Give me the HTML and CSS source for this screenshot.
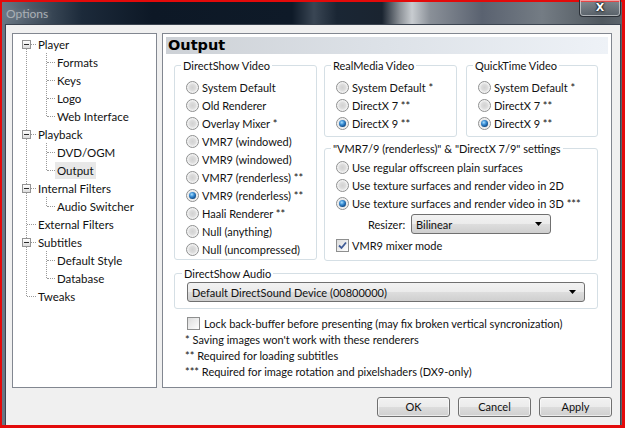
FILE: index.html
```html
<!DOCTYPE html>
<html>
<head>
<meta charset="utf-8">
<title>Options</title>
<link rel="stylesheet" href="styles.css">
</head>
<body>
<div class="window">
  <div class="titlebar">
    <span class="title">Options</span>
    <div class="close">X</div>
  </div>
  <div class="client">
    <div class="main">
      <div class="treebox">
        <ul class="tree">
          <li>
            <div class="row"><span class="exp"></span><span class="label">Player</span></div>
            <ul class="sub">
              <li><div class="row"><span class="label">Formats</span></div></li>
              <li><div class="row"><span class="label">Keys</span></div></li>
              <li><div class="row"><span class="label">Logo</span></div></li>
              <li><div class="row"><span class="label">Web Interface</span></div></li>
            </ul>
          </li>
          <li>
            <div class="row"><span class="exp"></span><span class="label">Playback</span></div>
            <ul class="sub">
              <li><div class="row"><span class="label">DVD/OGM</span></div></li>
              <li><div class="row"><span class="label selected">Output</span></div></li>
            </ul>
          </li>
          <li>
            <div class="row"><span class="exp"></span><span class="label">Internal Filters</span></div>
            <ul class="sub">
              <li><div class="row"><span class="label">Audio Switcher</span></div></li>
            </ul>
          </li>
          <li><div class="row"><span class="label">External Filters</span></div></li>
          <li>
            <div class="row"><span class="exp"></span><span class="label">Subtitles</span></div>
            <ul class="sub">
              <li><div class="row"><span class="label">Default Style</span></div></li>
              <li><div class="row"><span class="label">Database</span></div></li>
            </ul>
          </li>
          <li><div class="row"><span class="label">Tweaks</span></div></li>
        </ul>
      </div>
      <div class="panel">
        <div class="header">Output</div>
        <div class="content">
          <div class="toprow">
            <fieldset class="group dsv">
              <legend>DirectShow Video</legend>
              <div class="opt"><span class="radio"></span>System Default</div>
              <div class="opt"><span class="radio"></span>Old Renderer</div>
              <div class="opt"><span class="radio"></span>Overlay Mixer *</div>
              <div class="opt"><span class="radio"></span>VMR7 (windowed)</div>
              <div class="opt"><span class="radio"></span>VMR9 (windowed)</div>
              <div class="opt"><span class="radio"></span>VMR7 (renderless) **</div>
              <div class="opt"><span class="radio on"></span>VMR9 (renderless) **</div>
              <div class="opt"><span class="radio"></span>Haali Renderer **</div>
              <div class="opt"><span class="radio"></span>Null (anything)</div>
              <div class="opt"><span class="radio"></span>Null (uncompressed)</div>
            </fieldset>
            <div class="rightcol">
              <div class="pair">
                <fieldset class="group rm">
                  <legend>RealMedia Video</legend>
                  <div class="opt"><span class="radio"></span>System Default *</div>
                  <div class="opt"><span class="radio"></span>DirectX 7 **</div>
                  <div class="opt"><span class="radio on"></span>DirectX 9 **</div>
                </fieldset>
                <fieldset class="group qt">
                  <legend>QuickTime Video</legend>
                  <div class="opt"><span class="radio"></span>System Default *</div>
                  <div class="opt"><span class="radio"></span>DirectX 7 **</div>
                  <div class="opt"><span class="radio on"></span>DirectX 9 **</div>
                </fieldset>
              </div>
              <fieldset class="group vmr">
                <legend>"VMR7/9 (renderless)" &amp; "DirectX 7/9" settings</legend>
                <div class="opt"><span class="radio"></span>Use regular offscreen plain surfaces</div>
                <div class="opt"><span class="radio"></span>Use texture surfaces and render video in 2D</div>
                <div class="opt"><span class="radio on"></span>Use texture surfaces and render video in 3D ***</div>
                <div class="resizer">
                  <span class="rlabel">Resizer:</span>
                  <div class="combo small"><span>Bilinear</span><svg class="arrow" width="7" height="4" viewBox="0 0 7 4"><path d="M0 0H7L3.5 4Z" fill="#000"/></svg></div>
                </div>
                <div class="opt chk"><span class="checkbox on"><svg width="11" height="11" viewBox="0 0 11 11"><path d="M2 5.5L4.5 8L9 2.5" fill="none" stroke="#3f5b96" stroke-width="1.8"/></svg></span>VMR9 mixer mode</div>
              </fieldset>
            </div>
          </div>
          <fieldset class="group audio">
            <legend>DirectShow Audio</legend>
            <div class="combo wide"><span>Default DirectSound Device (00800000)</span><svg class="arrow" width="7" height="4" viewBox="0 0 7 4"><path d="M0 0H7L3.5 4Z" fill="#000"/></svg></div>
          </fieldset>
          <div class="opt lock"><span class="checkbox"></span>Lock back-buffer before presenting (may fix broken vertical syncronization)</div>
          <div class="notes">
            <div>* Saving images won't work with these renderers</div>
            <div>** Required for loading subtitles</div>
            <div>*** Required for image rotation and pixelshaders (DX9-only)</div>
          </div>
        </div>
      </div>
    </div>
    <div class="buttons">
      <div class="btn">OK</div>
      <div class="btn">Cancel</div>
      <div class="btn">Apply</div>
    </div>
  </div>
</div>
</body>
</html>
```

FILE: styles.css
```css
html, body {
  margin: 0;
  padding: 0;
}
body {
  width: 625px;
  height: 428px;
  overflow: hidden;
  background: #e30a0a;
  font-family: Lato, "Liberation Sans", sans-serif;
  font-size: 11px;
  color: #111;
}
.window {
  margin: 2px 0 0 2px;
  width: 620px;
  height: 423px;
  box-sizing: border-box;
  padding: 0 1px 0 3px;
  display: flex;
  flex-direction: column;
  background: linear-gradient(90deg, #6a7784 0px, #4a5866 30px, #1c2a3a 80px, #0d1826 150px, #0e1a28 290px, #3a4654 312px, #1a2634 335px, #1a2430 380px, #8d9298 398px, #c8ccd0 410px, #8a9098 428px, #5a6270 480px, #747c84 540px, #50585f 600px, #5c646c 620px);
}
.titlebar {
  height: 22px;
  flex: none;
  display: flex;
  align-items: center;
  justify-content: space-between;
  padding-left: 1px;
}
.title {
  color: #aab0b6;
  font-size: 12px;
  text-shadow: 0 0 6px rgba(255,255,255,0.25);
  margin-top: 1px;
}
.close {
  align-self: flex-start;
  margin-top: -2px;
  width: 42px;
  height: 17px;
  box-sizing: border-box;
  border: 1px solid #2a2f36;
  border-top: none;
  border-radius: 0 0 4px 4px;
  box-shadow: inset 0 0 0 1px rgba(255,255,255,0.5);
  background: linear-gradient(rgba(255,255,255,0.25), rgba(90,100,110,0.35));
  color: #fff;
  font-family: "DejaVu Sans", sans-serif;
  font-weight: bold;
  font-size: 11px;
  line-height: 15px;
  text-align: center;
  text-shadow: 0 0 2px #000, 0 0 2px #000;
}
.client {
  flex: 1;
  background: #f0f0f0;
  border: 1px solid #3b4450;
  border-bottom: none;
  padding: 8px 8px 0 6px;
  display: flex;
  flex-direction: column;
}
.main {
  display: flex;
  gap: 5px;
  height: 355px;
}
.treebox {
  width: 145px;
  height: 355px;
  box-sizing: border-box;
  border: 1px solid #828790;
  background: #fff;
  font-size: 11.5px;
}
.tree, .tree ul {
  list-style: none;
  margin: 0;
  padding: 0;
  position: relative;
}
.tree {
  padding-top: 1px;
}
.tree::before {
  content: "";
  position: absolute;
  left: 13px;
  top: 10px;
  bottom: 9px;
  border-left: 1px dotted #9a9a9a;
}
.tree .sub::before {
  content: "";
  position: absolute;
  left: 33px;
  top: 0;
  bottom: 9px;
  border-left: 1px dotted #9a9a9a;
}
.row {
  position: relative;
  height: 18px;
  display: flex;
  align-items: center;
  padding-left: 23px;
}
.row::before {
  content: "";
  position: absolute;
  left: 14px;
  width: 9px;
  top: 9px;
  border-top: 1px dotted #9a9a9a;
}
.sub .row {
  padding-left: 42px;
}
.sub .row::before {
  left: 34px;
  width: 8px;
}
.exp {
  position: absolute;
  left: 9px;
  top: 5px;
  width: 9px;
  height: 9px;
  box-sizing: border-box;
  border: 1px solid #939393;
  background: linear-gradient(#ffffff, #dcdcdc);
  z-index: 1;
  display: flex;
  align-items: center;
  justify-content: center;
}
.exp::after {
  content: "";
  width: 5px;
  height: 1px;
  background: #2c2c2c;
}
.label {
  padding: 0 2px;
  line-height: 17px;
  white-space: nowrap;
}
.label.selected {
  background: #e8e8e8;
}
.panel {
  width: 450px;
  height: 355px;
  box-sizing: border-box;
  border: 1px solid #828790;
  background: #fff;
  padding: 3px;
}
.header {
  height: 17px;
  background: linear-gradient(90deg, #cdd1d6 0%, #dde2e8 50%, #eef2f7 100%);
  font-family: "DejaVu Sans", sans-serif;
  font-weight: bold;
  font-size: 14.5px;
  line-height: 17px;
  padding-left: 2px;
  color: #000;
}
.content {
  padding: 4px 10px 0 8px;
}
.toprow {
  display: flex;
  gap: 7px;
  align-items: flex-start;
}
.group {
  margin: 0;
  min-width: 0;
  box-sizing: border-box;
  border: 1px solid #d5dfe5;
  border-radius: 3px;
  padding: 5px 11px 1px 11px;
}
.group legend {
  padding: 0 2px;
  margin-left: -5px;
  line-height: 15px;
  white-space: nowrap;
}
.dsv {
  width: 143px;
}
.rightcol {
  width: 274px;
  display: flex;
  flex-direction: column;
  gap: 4px;
}
.pair {
  display: flex;
  gap: 9px;
}
.rm {
  width: 133px;
  padding-bottom: 4px;
}
.qt {
  width: 132px;
  padding-bottom: 4px;
}
.vmr {
  padding-top: 2px;
  padding-bottom: 6px;
}
.opt {
  height: 18px;
  display: flex;
  align-items: center;
  gap: 3px;
  white-space: nowrap;
}
.radio {
  flex: none;
  width: 13px;
  height: 13px;
  box-sizing: border-box;
  border-radius: 50%;
  border: 1px solid #8e8f8f;
  background: radial-gradient(circle at 50% 50%, #d2d2d2 0, #dcdcdc 3px, #ececec 4.5px, #fbfbfb 6px);
  display: flex;
  align-items: center;
  justify-content: center;
}
.radio.on::after {
  content: "";
  width: 7px;
  height: 7px;
  border-radius: 50%;
  background: radial-gradient(circle at 40% 35%, #a8e0ff 0, #3c8fd6 35%, #11508f 70%, #0a3566 100%);
}
.checkbox {
  flex: none;
  width: 13px;
  height: 13px;
  box-sizing: border-box;
  border: 1px solid #8e8f8f;
  background: linear-gradient(135deg, #dcdcdc, #f4f4f4 70%, #ffffff);
  display: flex;
  align-items: center;
  justify-content: center;
}
.checkbox svg {
  display: block;
}
.resizer {
  display: flex;
  align-items: center;
  height: 20px;
  margin-top: 2px;
  margin-bottom: 2px;
}
.rlabel {
  margin-left: 32px;
  width: 43px;
}
.combo {
  height: 20px;
  box-sizing: border-box;
  border: 1px solid #707070;
  border-radius: 3px;
  background: linear-gradient(#f2f2f2 0%, #ebebeb 50%, #dddddd 50%, #cfcfcf 100%);
  display: flex;
  align-items: center;
  justify-content: space-between;
  padding: 0 8px 0 4px;
  white-space: nowrap;
}
.combo.small {
  width: 140px;
}
.combo.wide {
  width: 398px;
}
.arrow {
  display: block;
  flex: none;
}
.audio {
  margin-top: 5px;
  padding: 1px 12px 6px 12px;
}
.lock {
  margin-top: 5px;
  padding-left: 13px;
  gap: 4px;
}
.notes {
  padding-left: 11px;
  line-height: 16px;
}
.buttons {
  margin-top: 9px;
  display: flex;
  justify-content: flex-end;
  gap: 8px;
}
.btn {
  width: 73px;
  height: 20px;
  box-sizing: border-box;
  border: 1px solid #707070;
  border-radius: 3px;
  background: linear-gradient(#f2f2f2 0%, #ebebeb 50%, #dddddd 50%, #cfcfcf 100%);
  box-shadow: inset 0 0 0 1px rgba(255,255,255,0.6);
  text-align: center;
  line-height: 18px;
}
```
